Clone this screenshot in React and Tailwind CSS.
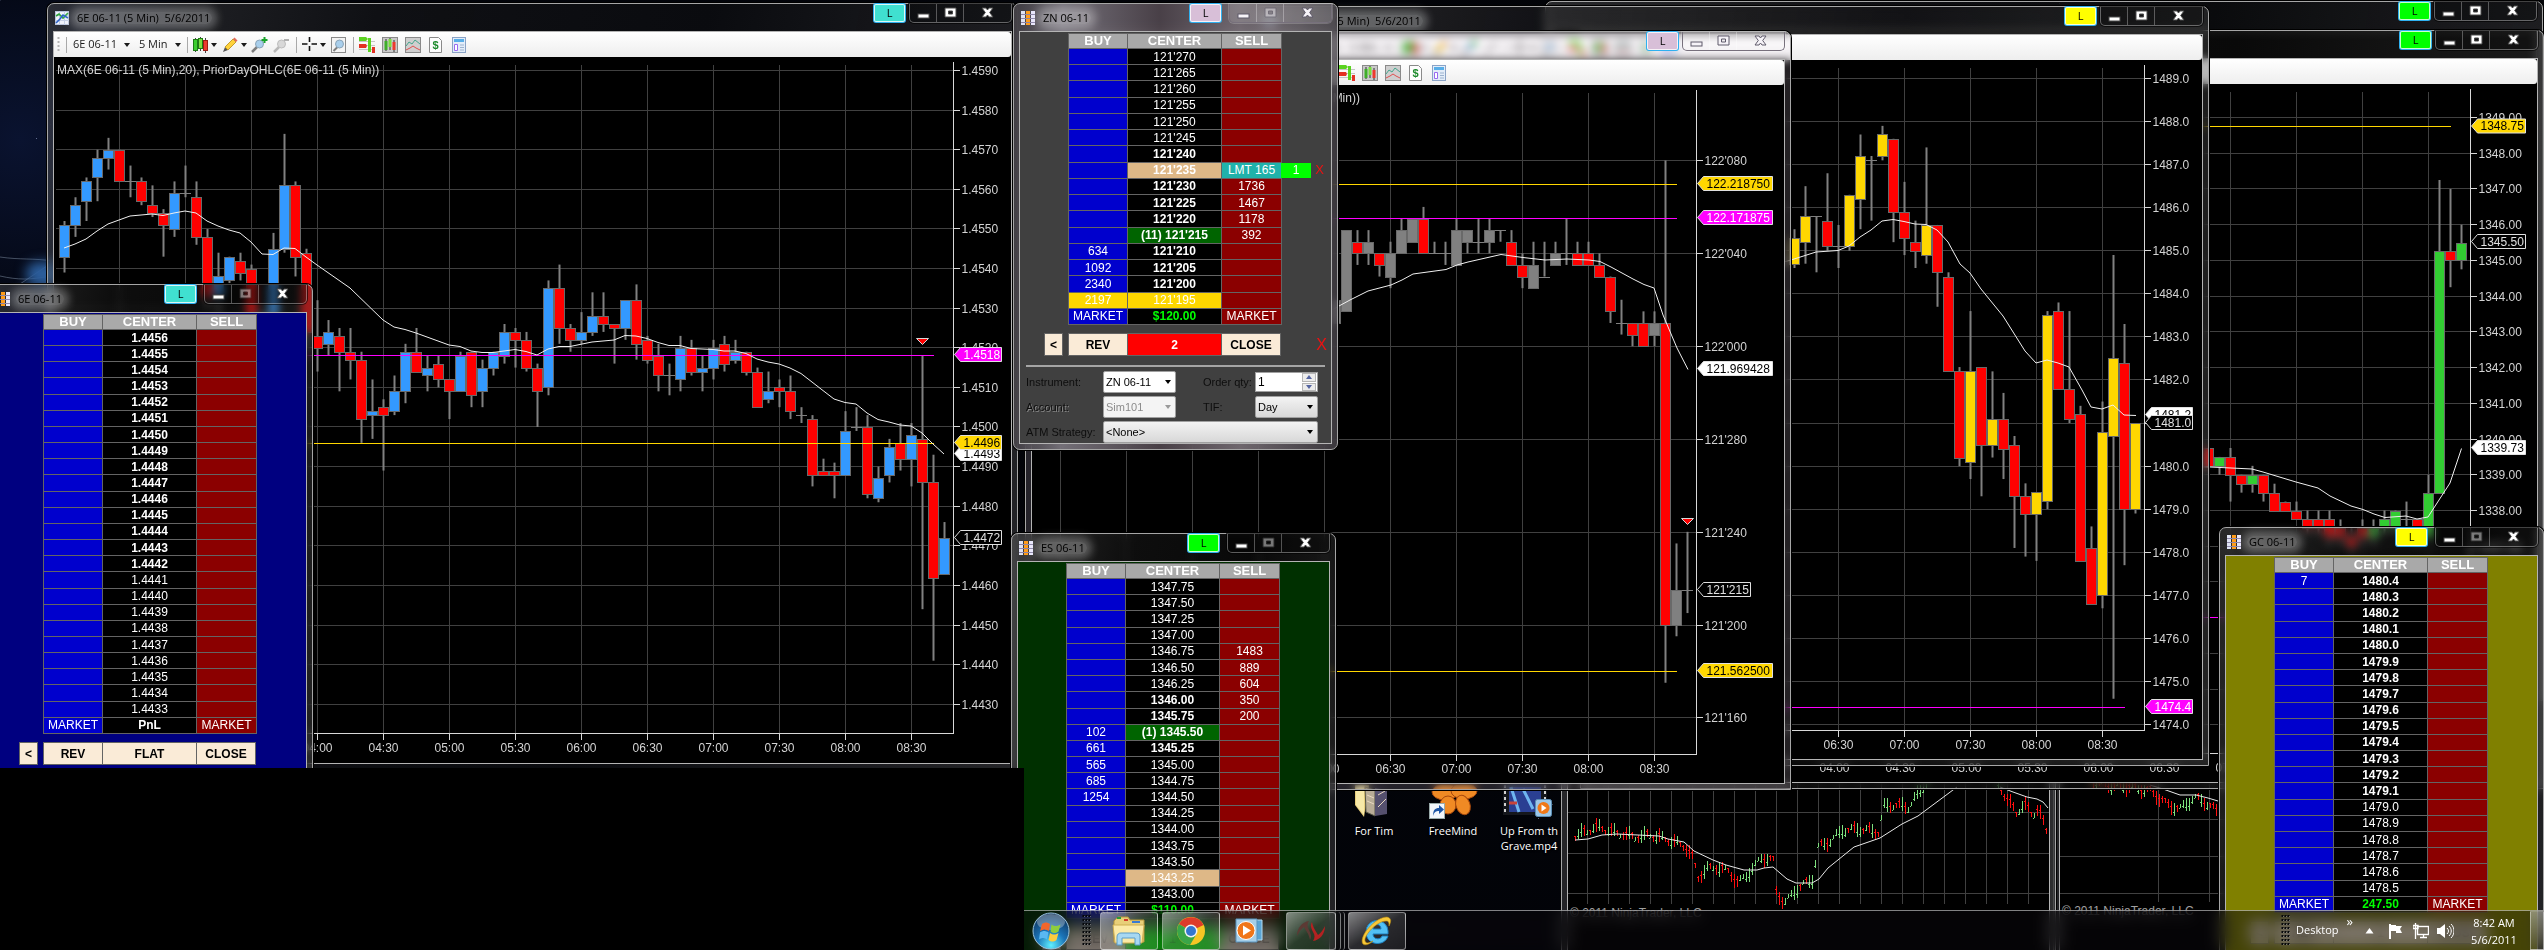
import React from 'react';
import clsx from 'clsx';

/* ---------- chart data: [open, high, low, close] in ticks ---------- */

const EURO = [
  [143,152,139,151],[151,158,148,156],[157,163,152,162],[163,170,157,168],[168,173,165,170],[170,170,162,162],
  [162,166,158,162],[162,163,156,157],[156,161,153,154],[154,155,143,151],[150,162,148,159],[159,166,158,159],
  [158,162,146,148],[148,150,130,133],[133,144,128,138],[137,143,136,143],[142,144,137,139],[140,141,125,128],
  [126,129,125,128],[128,149,125,145],[145,174,144,161],[161,162,138,143],[144,145,120,124],[123,132,114,120],
  [121,127,118,124],[123,125,109,119],[119,125,112,117],[117,119,96,102],[103,112,97,104],[105,107,89,103],
  [104,113,103,109],[109,121,106,119],[119,125,114,114],[113,118,109,115],[116,118,110,112],[112,112,102,109],
  [109,119,109,118],[119,119,105,108],[109,117,105,115],[115,119,113,119],[118,126,116,124],[124,125,115,122],
  [122,124,114,115],[115,116,100,109],[110,137,108,135],[135,141,121,125],[125,126,119,122],[122,129,121,124],
  [124,134,123,128],[128,134,124,126],[126,126,116,125],[125,132,122,132],[132,136,117,121],[122,123,116,117],
  [118,121,109,113],[113,116,108,113],[112,123,109,120],[120,122,113,114],[114,118,109,115],[115,122,112,120],
  [121,123,114,116],[117,122,116,119],[119,119,113,114],[114,115,105,105],[107,114,106,109],[110,112,105,109],
  [109,113,102,104],[103,105,101,103],[102,103,85,88],[89,92,88,88],[89,91,82,88],[88,104,88,99],
  [100,105,99,100],[100,103,82,83],[82,90,81,87],[88,97,86,95],[96,101,89,92],[92,101,85,98],
  [97,118,54,86],[86,93,41,62],[63,76,63,72],
];
const EURO_MA = '64,248 75,244 86,239 97,231 108,224 119,220 130,216 141,215 152,214 163,215.5 174,213 185,211 196,213 207,221 218,226 229,230 240,233 251,242 262,254 273,254.5 284,248 295,248.5 306,257 317,265 350,288 383,320 394,327 405,329.5 416,333 427,337 438,341 449,345 460,346.5 471,351 482,352.5 493,352.5 504,351 515,349.5 526,351.5 537,355 548,349 559,346.5 570,346.5 592,342 614,340 625,335.5 636,336 647,338.5 658,342.5 669,345.5 680,345.5 691,348.5 702,349 713,349.5 724,351 735,351 746,353.5 757,359 768,362 779,364 790,368 801,373.5 821,389 834,399 845,402.5 856,404 867,413 878,419.5 889,422 900,425 911,426 922,433 933,444 944,454';

const NOTES = [
  [34,36,34,36],[35,42,35,42],[41,42,39,40],[40,42,39,41],[40,40,38,39],[38,41,37,40],[40,43,40,42],[41,43,41,43],[43,44,40,40],
  [40,41,40,40],[40,41,39,40],[39,43,39,42],[41,42,40,42],[41,43,40,41],[41,43,40,42],[42,42,41,42],[41,42,39,39],
  [39,40,37,38],[37,41,37,39],[38,41,38,38],[39,41,39,40],[40,43,39,40],[40,41,39,39],[40,41,39,39],[39,40,38,38],
  [38,38,34,35],[34,36,33,34],[34,34,32,33],[34,35,32,32],[33,35,32,34],[34,48,3,8],[8,15,7,11],[11,16,9,11],
];
const NOTES_MA = '1330,311 1339,306 1350,300 1368,291 1391,285 1402,280 1413,274 1446,269.5 1457,265 1468,262 1490,257 1501,254.5 1523,257.5 1545,260 1567,259 1589,260 1600,261.5 1611,267 1633,279 1644,284.5 1654,288 1663,315 1677,348 1688,369.5';

const GOLD = [
  [147,155,146,153],[152,165,147,158],[158,158,145,158],[157,168,150,151],[151,156,146,151],[151,163,150,163],
  [162,177,155,172],[171,172,157,171],[172,179,171,177],[176,176,152,159],[159,166,149,153],[152,157,146,150],
  [149,174,147,156],[156,156,137,145],[144,145,122,122],[122,123,100,102],[101,136,97,122],[123,123,93,105],
  [105,122,102,111],[111,117,97,104],[105,107,81,93],[93,96,79,89],[89,94,78,94],[92,136,90,135],
  [136,138,118,118],[118,136,110,111],[112,114,78,78],[81,86,68,68],[70,115,67,108],[107,149,46,125],
  [124,133,77,90],[90,110,89,110],
];
const GOLD_MA = '1780,263 1791,260 1816,252 1838,250.5 1849,246 1860,237 1871,230 1882,221 1893,219.5 1904,221.5 1915,224 1926,224.5 1937,230 1948,242 1960,264 1970,273 1981,289 2003,316 2025,351 2036,363 2047,360 2058,363 2069,367 2082,390 2091,407 2102,409 2113,405 2124,415 2136,415.5';

const MINI = [
  [7,7,5,5],[5,6,4,6],[6,7,1,4],[4,4,2,3],[3,5,2,4],[4,4,1,2],[2,3,0,0],[1,1,0,0],[0,1,-1,-1],[-1,0,-3,-2],
  [-1,0,-3,-2],[-1,0,-4,-3],[-2,-1,-4,-3],[-3,-2,-5,-4],[-2,-1,-4,-3],[-3,-1,-4,-2],[-2,0,-3,-1],[-2,0,-3,0],
  [-1,1,-3,-1],[-1,-1,-4,-3],[-3,4,-3,2],[2,37,2,29],[29,36,25,28],[28,32,27,30],
];
const MINI_MA = '2200,467 2210,467 2252,469 2263,472 2296,482 2318,488 2330,496 2351,506 2363,509.5 2374,514 2385,517.5 2406,516 2417,519 2428,517 2450,483 2461.5,448.5';

/* ---------- charts ---------- */

function Candle({ x, open, high, low, close, up }) {
  const top = Math.round(Math.min(open, close)) + 0.5;
  const bottom = Math.round(Math.max(open, close)) + 0.5;
  return (
    <g>
      <line x1={x} x2={x} y1={high} y2={low} stroke="#808080" strokeWidth="2" />
      {bottom - top < 1 ? (
        <line x1={x - 5.5} x2={x + 5.5} y1={top} y2={top} stroke="#808080" />
      ) : (
        <rect x={x - 5} y={top} width="10" height={bottom - top} fill={close > open ? '#ff0000' : up} stroke="#696969" />
      )}
    </g>
  );
}

function Tag({ x, y, text, fill, color = '#000000', width }) {
  return (
    <g>
      <polygon
        points={`${x + 1},${y} ${x + 7},${y - 7} ${x + width},${y - 7} ${x + width},${y + 7} ${x + 7},${y + 7}`}
        fill={fill}
        stroke="#e0e0e0"
      />
      <text x={x + 10} y={y + 4} fill={color}>{text}</text>
    </g>
  );
}

function PriceChart({ view, caption, candles, firstX, toY, up, ma, prices, times, axis, lines, tags, marker, left = view[0] + 2 }) {
  return (
    <svg
      viewBox={view.join(' ')}
      width={view[2]}
      height={view[3]}
      className="block shrink-0 bg-black text-[12px]"
      role="img"
      aria-label={caption || 'Price chart'}
    >
      <g stroke="#404040" shapeRendering="crispEdges">
        {prices.map(([label, y]) => <line key={label} x1={left} x2={axis.x} y1={y} y2={y} />)}
        {times.map(([label, x]) => <line key={label} x1={x} x2={x} y1={axis.top + 3} y2={axis.bottom} />)}
      </g>
      <g stroke="#d8d8d8" shapeRendering="crispEdges">
        <line x1={axis.x} x2={axis.x} y1={axis.top} y2={axis.bottom} />
        <line x1={left} x2={axis.x} y1={axis.bottom} y2={axis.bottom} />
        {prices.map(([label, y]) => <line key={label} x1={axis.x} x2={axis.x + 6} y1={y} y2={y} />)}
        {times.map(([label, x]) => <line key={label} x1={x} x2={x} y1={axis.bottom} y2={axis.bottom + 6} />)}
      </g>
      <g fill="#d3d3d3">
        {prices.map(([label, y]) => <text key={label} x={axis.x + 8} y={y + 4}>{label}</text>)}
        {times.map(([label, x]) => <text key={label} x={x} y={axis.bottom + 18} textAnchor="middle">{label}</text>)}
        {caption && <text x={view[0] + 3} y={view[1] + 17}>{caption}</text>}
      </g>
      {candles.map(([o, h, l, c], i) => (
        <Candle key={i} x={firstX + 11 * i} open={toY(o)} high={toY(h)} low={toY(l)} close={toY(c)} up={up} />
      ))}
      {lines.map(([y, x2, color]) => <line key={y} x1={left} x2={x2} y1={y} y2={y} stroke={color} shapeRendering="crispEdges" />)}
      <polyline points={ma} fill="none" stroke="#f0f0f0" strokeWidth="1" />
      {tags.map((t) => <Tag key={t.text} x={axis.x} {...t} />)}
      {marker && (
        <polygon
          points={`${marker[0] - 6},${marker[1]} ${marker[0] + 6},${marker[1]} ${marker[0]},${marker[1] + 6}`}
          fill="#ff0000"
          stroke="#d8d8d8"
        />
      )}
    </svg>
  );
}

const timeScale = (labels, firstX) => labels.map((t, i) => [t, firstX + 66 * i]);

/* ---------- icons ---------- */

function ChartIcon() {
  return (
    <svg width="14" height="14" viewBox="0 0 14 14" className="shrink-0" aria-hidden="true">
      <rect x="0.5" y="0.5" width="13" height="13" fill="#eef2fb" stroke="#b9c3da" />
      <path d="M0 4.5h14M0 9.5h14M4.5 0v14M9.5 0v14" stroke="#c4cfe6" />
      <path d="M1 5l3-2 4 4 5-5" fill="none" stroke="#2fa53a" strokeWidth="1.6" />
      <path d="M1 12l4-4 3-4 5 3" fill="none" stroke="#2b62c9" strokeWidth="1.6" />
    </svg>
  );
}

function LadderIcon() {
  return (
    <svg width="14" height="14" viewBox="0 0 14 14" className="shrink-0" aria-hidden="true">
      <path d="M0 0h4v14H0z" fill="#dfe3f3" />
      <path d="M5 0h4v14H5z" fill="#ff9c1a" />
      <path d="M10 0h4v14h-4z" fill="#e8e6fb" />
      <path d="M0 3.5h14M0 7.5h14M0 11.5h14" stroke="#8d86a8" />
    </svg>
  );
}

const Caret = ({ className }) => (
  <svg width="6" height="4" viewBox="0 0 6 4" className={clsx('shrink-0', className)} aria-hidden="true"><path d="M0 0h6L3 4z" fill="currentColor" /></svg>
);
const Bar = () => <span className="h-4 w-px shrink-0 bg-[#a9a9a9]" />;

function Lens({ sign }) {
  return (
    <svg width="17" height="16" viewBox="0 0 17 16" aria-hidden="true">
      <path d="M1 15l5-5" stroke={sign === '-' ? '#b8b8b8' : '#7d7d7d'} strokeWidth="2.5" />
      <circle cx="8.500" cy="7" r="4" fill={sign === '-' ? '#d8d8d8' : '#a9cfec'} stroke={sign === '-' ? '#bdbdbd' : '#8aa4b8'} />
      {sign === '+' ? <path d="M13.500 0v6M10.500 3h6" stroke="#17a22b" strokeWidth="2" /> : <path d="M11 3h5" stroke="#b0b0b0" strokeWidth="2" />}
    </svg>
  );
}

function Toolbar({ symbol }) {
  const icon = 'flex shrink-0 items-center';
  return (
    <div className="flex h-[25px] shrink-0 items-center rounded-r-[3px] bg-gradient-to-b from-white to-[#eeeeee] pl-[3px] text-[11px] text-[#1b1b1b]">
      <svg width="3" height="16" viewBox="0 0 3 16" className="shrink-0" aria-hidden="true"><path d="M1.500 0v16" stroke="#b5b5b5" strokeWidth="2" strokeDasharray="2 2" /></svg>
      <span className="w-[6px] shrink-0" />
      <Bar />
      <button className="ml-[6px] flex shrink-0 items-center gap-[7px] font-['Open_Sans',sans-serif] whitespace-nowrap">{symbol}<Caret /></button>
      <button className="ml-[9px] flex shrink-0 items-center gap-[7px] font-['Open_Sans',sans-serif] whitespace-nowrap">5 Min<Caret /></button>
      <span className="w-[6px] shrink-0" />
      <Bar />
      <button aria-label="Chart style" className={clsx(icon, 'ml-[5px] gap-[3px]')}>
        <svg width="15" height="16" viewBox="0 0 15 16" aria-hidden="true">
          <path d="M2.500 1v14M7.500 0v14M12.500 1v15" stroke="#444" />
          <rect x="0.500" y="2.500" width="4" height="11" fill="#3ccf2f" stroke="#1d7c15" />
          <rect x="5.500" y="1.500" width="4" height="10" fill="#7be03f" stroke="#1d7c15" />
          <rect x="10.500" y="3.500" width="4" height="10" fill="#ee3b2e" stroke="#9c1d14" />
        </svg>
        <Caret />
      </button>
      <button aria-label="Drawing tools" className={clsx(icon, 'ml-[5px] gap-[3px]')}>
        <svg width="16" height="16" viewBox="0 0 16 16" aria-hidden="true">
          <path d="M1 15l2-5 3 3z" fill="#555" />
          <path d="M3 10l8-8 3 3-8 8z" fill="#ffd23b" stroke="#b58a14" strokeWidth="0.800" />
          <path d="M11 2l1.500-1.500 3 3L14 5z" fill="#e06a5a" />
        </svg>
        <Caret />
      </button>
      <button aria-label="Zoom in" className={clsx(icon, 'ml-[4px]')}><Lens sign="+" /></button>
      <button aria-label="Zoom out" className={clsx(icon, 'ml-[5px]')}><Lens sign="-" /></button>
      <span className="w-[6px] shrink-0" />
      <Bar />
      <button aria-label="Cursor" className={clsx(icon, 'ml-[5px] gap-[3px]')}>
        <svg width="15" height="15" viewBox="0 0 15 15" aria-hidden="true"><path d="M7.500 0v5M7.500 9v5M0 7h5.500M9.500 7H15" stroke="#111" strokeWidth="1.600" /></svg>
        <Caret />
      </button>
      <button aria-label="Data box" className={clsx(icon, 'ml-[5px]')}>
        <svg width="15" height="16" viewBox="0 0 15 16" aria-hidden="true">
          <rect x="0.500" y="0.500" width="14" height="15" fill="#f4f4f4" stroke="#8a8a8a" />
          <path d="M2.500 14l4-4" stroke="#7d7d7d" strokeWidth="2" />
          <circle cx="8.500" cy="7" r="4" fill="#a9cfec" stroke="#8aa4b8" />
        </svg>
      </button>
      <span className="w-[7px] shrink-0" />
      <Bar />
      <div className="ml-[5px] flex shrink-0 items-center gap-[7px]">
        <button aria-label="Chart trader" className={icon}>
          <svg width="16" height="16" viewBox="0 0 16 16" aria-hidden="true">
            <path d="M0 4.500h16M0 8.500h16M0 12.500h16" stroke="#c4c4c4" />
            <path d="M0 0h7l2 2-2 2H0z" fill="#5bd321" />
            <path d="M0 7h7l1 2-1 2H0z" fill="#e33022" />
            <path d="M9 1h3v14H9z" fill="#5bd321" />
            <path d="M13 10h3v6h-3z" fill="#e33022" />
          </svg>
        </button>
        <button aria-label="Data series" className={icon}>
          <svg width="16" height="16" viewBox="0 0 16 16" aria-hidden="true">
            <rect x="0.500" y="0.500" width="15" height="15" fill="#c9c9c9" stroke="#8a8a8a" />
            <path d="M4 2v12M8 1v12M12 3v12" stroke="#333" />
            <path d="M2.500 4h3v9h-3z" fill="#3fae2a" />
            <path d="M6.500 2h3v8h-3z" fill="#7be03f" />
            <path d="M10.500 5h3v8h-3z" fill="#ee3b2e" />
          </svg>
        </button>
        <button aria-label="Indicators" className={icon}>
          <svg width="16" height="16" viewBox="0 0 16 16" aria-hidden="true">
            <rect x="0.500" y="0.500" width="15" height="15" fill="#cfcfcf" stroke="#8a8a8a" />
            <path d="M1 9l3-4 3 2 3-4 5 4" fill="none" stroke="#44a58c" />
            <path d="M1 13l4-2 3-2 3 2 4 2" fill="none" stroke="#e05050" />
          </svg>
        </button>
        <button aria-label="Strategies" className={clsx(icon, 'ml-[1px]')}>
          <svg width="13" height="16" viewBox="0 0 13 16" aria-hidden="true">
            <path d="M0.500 0.500h9l3 3v12h-12z" fill="#fdfdfd" stroke="#8a8a8a" />
            <text x="6.500" y="12" textAnchor="middle" fontSize="11" fontWeight="700" fill="#1f8c2e">$</text>
          </svg>
        </button>
        <button aria-label="Properties" className={clsx(icon, 'ml-[3px]')}>
          <svg width="14" height="16" viewBox="0 0 14 16" aria-hidden="true">
            <rect x="0.500" y="0.500" width="13" height="15" fill="#e3edf9" stroke="#8aa3c6" />
            <path d="M2 2h10v3H2z" fill="#58aee8" />
            <path d="M2.500 7.500h3v6h-3z" fill="#fff" stroke="#9a6bf0" />
            <path d="M8 8h4M8 10.500h4M8 13h4" stroke="#9db3cf" />
          </svg>
        </button>
      </div>
    </div>
  );
}

/* ---------- window frame ---------- */

const GLASS = {
  dark: 'bg-[linear-gradient(100deg,#5a5a5a73,#28282859_30%,#1e1e1e4d_60%,#5a5a5a66)]',
  clear: 'bg-[#f0dcf226]',
  mist: 'bg-[linear-gradient(to_right,#4a464ccc,#8f8a94cc_15%,#5b5058cc_45%,#8a8088cc_70%,#4a464ccc)]',
};

function Controls({ glass, dimMax }) {
  const dark = glass === 'dark';
  const fg = dark ? '#ffffff' : '#f6f3f8';
  const edge = dark ? '#4a4a4a' : '#5f5a6a';
  return (
    <div className={clsx('flex h-[19px] shrink-0 rounded-b-[5px] border border-t-0 ring-1', dark ? 'border-white/35 bg-black/30 ring-black/60' : 'border-[#77707c] bg-white/15 ring-white/20')}>
      <button aria-label="Minimize" className="flex w-[27px] items-center justify-center border-r border-white/30">
        <svg width="13" height="14" viewBox="0 0 13 14" aria-hidden="true"><rect x="1" y="8" width="11" height="4" fill={fg} stroke={edge} /></svg>
      </button>
      <button aria-label="Maximize" className="flex w-[27px] items-center justify-center border-r border-white/30">
        <svg width="13" height="12" viewBox="0 0 13 12" aria-hidden="true" opacity={dimMax ? 0.45 : 1}>
          <path fillRule="evenodd" d="M1 1h11v9H1zM4.500 4v3h4V4z" fill={fg} stroke={edge} />
        </svg>
      </button>
      <button aria-label="Close" className="flex w-[47px] items-center justify-center">
        <svg width="13" height="12" viewBox="0 0 13 12" aria-hidden="true">
          <path d="M1 1h4l1.500 2L8 1h4L8.700 5.500 12 10H8L6.500 8 5 10H1l3.300-4.500z" fill={fg} stroke={edge} />
        </svg>
      </button>
    </div>
  );
}

function Win({ className, title, icon, link, glass = 'dark', dimMax, children, bodyClass }) {
  return (
    <section
      className={clsx(
        'absolute flex flex-col rounded-t-[7px] border border-[#a6a6a6] px-[5px] pb-[5px] shadow-[0_0_0_1px_#000000] backdrop-blur-[4px]',
        GLASS[glass],
        className,
      )}
    >
      <header className="flex h-[27px] shrink-0 items-start">
        <div className="flex h-full min-w-0 flex-1 items-center gap-[6px] pl-[2px]">
          {icon}
          {title && (
            <h2 className="rounded-full bg-white/30 px-[2px] font-['Open_Sans',sans-serif] text-[11px] leading-[12px] whitespace-pre text-black shadow-[0_0_8px_5px_rgba(255,255,255,0.3)]">
              {title}
            </h2>
          )}
        </div>
        {link && (
          <button
            className={clsx(
              'h-[18px] w-[31px] shrink-0 rounded-[2px] border border-white/80 text-center font-[\'Open_Sans\',sans-serif] text-[11px] leading-[16px] text-black ring-1 ring-[#2fb0f0]',
              dimMax ? 'mr-[8px]' : 'mr-[4px]',
              link,
            )}
          >
            L
          </button>
        )}
        <Controls glass={glass} dimMax={dimMax} />
      </header>
      <div className={clsx('flex min-h-0 flex-1 flex-col overflow-hidden border border-[#b4b4b4]', bodyClass)}>{children}</div>
    </section>
  );
}

/* ---------- price ladders ---------- */

const cell = 'border border-[#646464] p-0 leading-[14px]';

function Ladder({ rows, height, pnl }) {
  return (
    <table className={clsx('mt-px ml-[48px] w-[213px] shrink-0 table-fixed border-collapse text-center text-[12px] text-white', height)}>
      <thead>
        <tr>
          <th className={clsx(cell, 'w-[59px] bg-[#a9a9a9] text-[13px]')}>BUY</th>
          <th className={clsx(cell, 'w-[94px] bg-[#a9a9a9] text-[13px]')}>CENTER</th>
          <th className={clsx(cell, 'w-[60px] bg-[#a9a9a9] text-[13px]')}>SELL</th>
        </tr>
      </thead>
      <tbody>
        {rows.map(({ p, buy, sell, bold, tone, order }) => (
          <tr key={p}>
            <td className={clsx(cell, tone === 'gold' ? 'bg-[#ffd700]' : 'bg-[#0000cd]')}>{buy}</td>
            <td
              className={clsx(
                cell,
                bold && 'font-bold',
                tone === 'gold' && 'bg-[#ffd700]',
                tone === 'tan' && 'bg-[#deb887]',
                tone === 'green' && 'bg-[#006400]',
                !tone && 'bg-black',
              )}
            >
              {p}
            </td>
            <td className={clsx(cell, order ? 'relative bg-[#20b2aa]' : 'bg-[#8b0000]')}>
              {sell}
              {order && (
                <span className="absolute top-0 left-full flex h-full items-center">
                  <span className="flex h-full w-[30px] items-center justify-center bg-[#00ff00]">{order}</span>
                  <button aria-label="Cancel order" className="w-[17px] text-[13px] text-[#ee1111]">X</button>
                </span>
              )}
            </td>
          </tr>
        ))}
        <tr>
          <td className={clsx(cell, 'bg-[#0000cd]')}>MARKET</td>
          <td className={clsx(cell, 'bg-black font-bold', pnl !== 'PnL' && 'text-[#00ff00]')}>{pnl}</td>
          <td className={clsx(cell, 'bg-[#8b0000]')}>MARKET</td>
        </tr>
      </tbody>
    </table>
  );
}

function LadderActions({ middle, middleClass = 'bg-[#faebd7]', cancel }) {
  const b = 'h-full border border-[#646464]';
  return (
    <div className="mt-[8px] flex h-[23px] shrink-0 items-stretch pl-[24px] text-[12px] font-bold text-black">
      <button aria-label="Collapse" className={clsx(b, 'mr-[5px] w-[19px] bg-[#faebd7]')}>&lt;</button>
      <button className={clsx(b, 'w-[60px] bg-[#faebd7]')}>REV</button>
      <button className={clsx(b, '-ml-px w-[95px]', middleClass)}>{middle}</button>
      <button className={clsx(b, '-ml-px w-[60px] bg-[#faebd7]')}>CLOSE</button>
      {cancel && <button aria-label="Cancel all" className="ml-auto mr-[4px] text-[16px] font-normal text-[#ee1111]">X</button>}
    </div>
  );
}

const range = (start, step, count, digits) => Array.from({ length: count }, (_, i) => (start - step * i).toFixed(digits));

const EURO_ROWS = range(1.4456, 0.0001, 24, 4).map((p, i) => ({ p, bold: i < 15 }));

const ZN_SIDE = {
  "121'230": { sell: 1736 }, "121'225": { sell: 1467 }, "121'220": { sell: 1178 },
  "121'210": { buy: 634 }, "121'205": { buy: 1092 }, "121'200": { buy: 2340 }, "121'195": { buy: 2197, tone: 'gold', bold: false },
  "121'235": { sell: 'LMT 165', tone: 'tan', order: 1 },
};
const ZN_ROWS = range(270, 5, 16, 0).map((n, i) => {
  const p = `121'${n}`;
  if (n === '215') return { p: "(11) 121'215", bold: true, tone: 'green', sell: 392 };
  return { p, bold: i >= 6, ...ZN_SIDE[p] };
});

const ES_SIDE = {
  '1346.75': { sell: 1483 }, '1346.50': { sell: 889 }, '1346.25': { sell: 604 }, '1346.00': { sell: 350, bold: true }, '1345.75': { sell: 200, bold: true },
  '1345.50': { p: '(1) 1345.50', buy: 102, bold: true, tone: 'green' }, '1345.25': { buy: 661, bold: true },
  '1345.00': { buy: 565 }, '1344.75': { buy: 685 }, '1344.50': { buy: 1254 }, '1343.25': { tone: 'tan' },
};
const ES_ROWS = range(1347.75, 0.25, 20, 2).map((p) => ({ p, ...ES_SIDE[p] }));

const GC_ROWS = range(1480.4, 0.1, 20, 1).map((p, i) => ({ p, bold: i < 14, buy: i === 0 ? 7 : undefined }));

function Combo({ id, value, className, disabled }) {
  return (
    <span className={clsx('relative block h-[22px]', className)}>
      <select
        id={id}
        defaultValue={value}
        disabled={disabled}
        className={clsx(
          'h-full w-full appearance-none rounded-[2px] border border-[#a0a0a0] pr-4 pl-[2px] text-[11px]',
          disabled ? 'bg-[#f4f4f4] text-[#8c8c8c]' : id === 'instrument' ? 'bg-white text-black' : 'bg-gradient-to-b from-[#f3f3f3] to-[#d8d8d8] text-black',
        )}
      >
        <option>{value}</option>
      </select>
      <Caret className={clsx('pointer-events-none absolute top-[9px] right-[5px]', disabled ? 'text-[#9a9a9a]' : 'text-black')} />
    </span>
  );
}

function OrderForm() {
  return (
    <form className="mx-[6px] mt-[9px] border-t-2 border-[#a5a5a5] pt-[4px] text-[11px] text-[#0d0d0d]">
      <div className="grid grid-cols-[77px_73px_27px_52px_63px] items-center gap-y-[3px]">
        <label htmlFor="instrument">Instrument:</label>
        <Combo id="instrument" value="ZN 06-11" />
        <span />
        <label htmlFor="qty" className="whitespace-nowrap">Order qty:</label>
        <span className="flex h-[20px] items-center border border-[#a0a0a0] bg-white pr-px">
          <input id="qty" defaultValue="1" inputMode="numeric" className="min-w-0 flex-1 bg-white pl-[2px] text-[12px] text-black outline-none" />
          <span className="flex h-[18px] w-[14px] flex-col gap-px">
            <button type="button" aria-label="Increase" className="flex flex-1 items-center justify-center border border-[#b5b5b5] bg-[#ececec] text-[#5464a0]"><Caret className="rotate-180" /></button>
            <button type="button" aria-label="Decrease" className="flex flex-1 items-center justify-center border border-[#b5b5b5] bg-[#ececec] text-[#5464a0]"><Caret /></button>
          </span>
        </span>
        <label htmlFor="account" className="[text-shadow:1px_1px_0_#8a8a8a]">Account:</label>
        <Combo id="account" value="Sim101" disabled />
        <span />
        <label htmlFor="tif">TIF:</label>
        <Combo id="tif" value="Day" />
        <label htmlFor="atm" className="whitespace-nowrap">ATM Strategy:</label>
        <Combo id="atm" value="<None>" className="col-span-4" />
      </div>
    </form>
  );
}

/* ---------- background chart bars ---------- */

const MINI_PATH = [
  [1575, 835], [1590, 828], [1600, 826], [1612, 831], [1622, 833], [1634, 836], [1650, 834], [1665, 838], [1672, 840], [1685, 846], [1692, 856],
  [1698, 876], [1706, 868], [1716, 866], [1728, 870], [1738, 882], [1750, 870], [1762, 856], [1773, 860], [1776, 890], [1784, 903], [1794, 890],
  [1803, 884], [1812, 878], [1818, 846], [1830, 840], [1842, 829], [1860, 828], [1878, 831], [1884, 805], [1894, 804], [1908, 806], [1920, 790],
  [1930, 778],
];
const MINI_PATH_2 = [[1998, 784], [2008, 800], [2016, 812], [2024, 802], [2032, 815], [2038, 806], [2043, 822], [2047, 834]];
const MINI_PATH_3 = [[2090, 780], [2105, 786], [2130, 788], [2150, 792], [2168, 806], [2180, 810], [2194, 798], [2206, 804], [2216, 812]];

function barsAlong(path) {
  const out = [];
  for (let x = path[0][0]; x <= path[path.length - 1][0]; x += 3) {
    const j = path.findIndex(([px]) => px >= x);
    const [x1, y1] = path[j];
    const [x0, y0] = path[Math.max(0, j - 1)];
    const y = x1 === x0 ? y1 : y0 + ((y1 - y0) * (x - x0)) / (x1 - x0);
    const wob = Math.sin(x * 1.7) * 3;
    const size = 2 + Math.abs(Math.sin(x * 2.3)) ** 2 * 5;
    out.push({ x, y: y + wob, size, up: Math.sin(x * 0.9) + (y0 - y1) * 0.08 > 0 });
  }
  return out;
}

function BarChart({ view, paths, ma, hs, vs, note }) {
  return (
    <svg viewBox={view.join(' ')} width={view[2]} height={view[3]} className="block shrink-0 bg-black text-[12px]" role="img" aria-label="Bar chart">
      <g stroke="#404040" shapeRendering="crispEdges">
        {hs.map((y) => <line key={y} x1={view[0]} x2={view[0] + view[2]} y1={y} y2={y} />)}
        {vs.map((x) => <line key={x} x1={x} x2={x} y1={view[1]} y2="903" />)}
      </g>
      <g shapeRendering="crispEdges">
        {paths.flatMap(barsAlong).map(({ x, y, size, up }) => (
          <path
            key={x}
            d={`M${x} ${Math.round(y - size)}V${Math.round(y + size)}M${x - 1} ${Math.round(y + (up ? 2 : -2))}h1M${x} ${Math.round(y - (up ? 2 : -2))}h1`}
            stroke={up ? '#7ee07e' : '#ff1010'}
            fill="none"
          />
        ))}
      </g>
      {ma.map((m) => <polyline key={m} points={m} fill="none" stroke="#e8e8e8" />)}
      <text x={view[0] + 2} y="916" fill="#a0a0a0">{note}</text>
    </svg>
  );
}

/* ---------- desktop ---------- */

function Stars() {
  const dots = Array.from({ length: 260 }, (_, i) => [(i * 7919) % 2544, (i * 4597) % 950, (i % 5) * 0.08 + 0.15]);
  return (
    <svg className="absolute inset-0 h-full w-full" aria-hidden="true">
      {dots.map(([x, y, o]) => <rect key={`${x}-${y}`} x={x} y={y} width="1" height="1" fill="#c8d4ff" opacity={o} />)}
      <path d="M0 257c20 3 34 1 52 4M0 276c18 4 30 4 50 0M20 284l30-20" stroke="#8494a8" strokeOpacity="0.5" fill="none" />
    </svg>
  );
}

function DesktopIcons() {
  return (
    <ul className="absolute top-[785px] left-[1335px] flex font-['Open_Sans',sans-serif] text-[11px] leading-[15px] text-white [text-shadow:0_1px_2px_#000]">
      <li className="flex w-[78px] flex-col items-center gap-[4px] text-center">
        <svg width="42" height="34" viewBox="0 0 42 34" aria-hidden="true">
          <path d="M2 0h14l-5 32-9-12z" fill="#e8cf7c" />
          <path d="M3 0h8v30l-8-10z" fill="#f7e9a8" />
          <path d="M12 2l10 3v26l-9-4z" fill="#b9ad97" stroke="#554" />
          <path d="M22 3l12 2v24l-12 2z" fill="#55506e" />
          <path d="M14 10l7 3M14 16l7 3M25 10l7-4M25 22l8-8" stroke="#e9d9c0" />
        </svg>
        <span>For Tim</span>
      </li>
      <li className="flex w-[80px] flex-col items-center gap-[4px] text-center">
        <svg width="50" height="34" viewBox="0 0 50 34" aria-hidden="true">
          <g fill="#f08a24" stroke="#a8480c">
            <ellipse cx="17" cy="7" rx="13" ry="8" />
            <ellipse cx="36" cy="6" rx="13" ry="8" />
            <ellipse cx="20" cy="20" rx="8" ry="9" />
            <ellipse cx="35" cy="20" rx="7" ry="10" transform="rotate(-20 35 20)" />
          </g>
          <rect x="1.500" y="18.500" width="15" height="15" fill="#f2f6fb" stroke="#9aa" />
          <path d="M5 31c0-6 2-8 6-8v-3l5 4.500-5 4.500v-3c-3 0-5 1-6 5z" fill="#1d55a5" />
        </svg>
        <span>FreeMind</span>
      </li>
      <li className="flex w-[72px] flex-col items-center gap-[4px] text-center">
        <svg width="52" height="34" viewBox="0 0 52 34" aria-hidden="true">
          <rect x="0" y="0" width="44" height="30" fill="#15171c" />
          <path d="M2 0v30M42 0v30" stroke="#d0d0d0" strokeWidth="2" strokeDasharray="3 3" />
          <rect x="6" y="2" width="32" height="25" fill="#2a3f92" />
          <path d="M8 2l8 25M20 4l10 20" stroke="#6fb6f0" strokeWidth="3" />
          <path d="M6 18h8" stroke="#c8443a" strokeWidth="3" />
          <rect x="32.500" y="14.500" width="16" height="17" rx="2" fill="#9cc7e8" stroke="#5a8db5" />
          <circle cx="40.500" cy="23" r="6" fill="#f07818" />
          <path d="M38.500 19.500v7l5-3.500z" fill="#fff" />
        </svg>
        <span>Up From th Grave.mp4</span>
      </li>
    </ul>
  );
}

const Grip = () => (
  <svg width="9" height="32" viewBox="0 0 9 32" className="shrink-0" aria-hidden="true">
    <path d="M1.500 0v32M4.500 0v32M7.500 0v32" stroke="#05070a" strokeWidth="2" strokeDasharray="2 2" />
    <path d="M2.500 1v32M5.500 1v32M8.500 1v32" stroke="#ffffff" strokeOpacity="0.350" strokeDasharray="1 3" />
  </svg>
);

function Taskbar() {
  const frame = 'flex h-[38px] items-center justify-center rounded-[3px] border border-white/45 bg-gradient-to-br from-white/50 via-white/15 to-white/10';
  return (
    <footer className="absolute right-0 bottom-0 left-[1024px] flex h-[40px] items-center border-t border-white/50 bg-[#0a080c]/50 font-['Open_Sans',sans-serif] text-[11px] text-white backdrop-blur-[8px]">
      <button aria-label="Start" className="ml-[8px]">
        <svg width="38" height="38" viewBox="0 0 38 38" aria-hidden="true">
          <defs>
            <radialGradient id="orb" cx="0.500" cy="0.900" r="0.900">
              <stop offset="0" stopColor="#5ff0ff" />
              <stop offset="0.450" stopColor="#1b74b8" />
              <stop offset="1" stopColor="#0e2d52" />
            </radialGradient>
          </defs>
          <circle cx="19" cy="19" r="18" fill="url(#orb)" stroke="#9bc3dd" />
          <ellipse cx="19" cy="10" rx="14" ry="8" fill="#ffffff" opacity="0.300" />
          <path d="M10 12c3-2 5-2 8 0l-1 7c-3-2-6-2-9 0z" fill="#f2662c" />
          <path d="M19.500 12.500c3 2 5 2 9 0l-2 7c-3 2-5 2-8 0z" fill="#8fce3c" />
          <path d="M8 20.500c3-2 5-2 8.500 0l-1.500 7c-3-2-5-2-8 0z" fill="#5ab8f2" />
          <path d="M18 21c3 2 5 2 8.500 0l-2 7c-3 2-5 2-8 0z" fill="#fccc3e" />
        </svg>
      </button>
      <span className="ml-[12px]"><Grip /></span>
      <button aria-label="Windows Explorer" className={clsx(frame, 'ml-[9px] w-[58px]')}>
        <svg width="34" height="30" viewBox="0 0 34 30" aria-hidden="true">
          <path d="M2 5l4-4h10l2 3h14v22H2z" fill="#e8cf78" stroke="#b7963a" />
          <path d="M1 9h31l-2 18H3z" fill="#fbeaa6" stroke="#cfae50" />
          <path d="M5 2h4" stroke="#2a9a3a" strokeWidth="2" /><path d="M12 4h4" stroke="#d23a2a" strokeWidth="2" /><path d="M20 6h8" stroke="#3a7ad2" strokeWidth="2" />
          <path d="M5 29v-8c0-3 2-4 4-4h15c3 0 4 1 4 4v8h-5v-7H10v7z" fill="#a7d8f2" stroke="#5a9cc8" />
        </svg>
      </button>
      <button aria-label="Google Chrome" className={clsx(frame, 'ml-[4px] w-[58px]')}>
        <svg width="30" height="30" viewBox="0 0 30 30" aria-hidden="true">
          <circle cx="15" cy="15" r="14" fill="#f6c624" />
          <path d="M15 15L3 8A14 14 0 0 1 27.500 9z" fill="#dd3b2b" />
          <path d="M15 15L2.900 8A14 14 0 0 0 14 29l6-10z" fill="#3aa648" />
          <circle cx="15" cy="15" r="6.500" fill="#f2f2f2" />
          <circle cx="15" cy="15" r="5" fill="#3477d0" />
        </svg>
      </button>
      <button aria-label="Media Player" className="flex h-[38px] w-[58px] items-center justify-center">
        <svg width="28" height="26" viewBox="0 0 28 26" aria-hidden="true">
          <path d="M5 2h22v20H5z" fill="#5aa4d4" stroke="#b5dcf2" />
          <path d="M1 1h21v23H1z" fill="#a6cfe8" stroke="#5b93bd" />
          <circle cx="11" cy="12.500" r="9" fill="#f0761a" stroke="#fff" />
          <path d="M8 7.500v10l8-5z" fill="#fff" />
        </svg>
      </button>
      <button aria-label="NinjaTrader" className={clsx(frame, 'ml-[8px] w-[50px]')}>
        <svg width="30" height="22" viewBox="0 0 30 22" aria-hidden="true">
          <path d="M1 16C1 8 6 2 13 1c-2 3-2 6 0 9 2 4 3 7 1 10-1-6-4-9-6-13-3 2-5 5-7 9z" fill="#5c3a34" />
          <path d="M29 6c0 8-5 14-12 15 2-3 2-6 0-9-2-4-3-7-1-10 1 6 4 9 6 13 3-2 5-5 7-9z" fill="#b32222" />
        </svg>
      </button>
      <span className="ml-[2px] h-[38px] w-[3px] rounded-r-[3px] border-r border-white/45" />
      <span className="h-[38px] w-[4px] rounded-r-[3px] border-r border-white/45" />
      <button aria-label="Internet Explorer" className={clsx(frame, 'ml-[3px] w-[58px]')}>
        <svg width="32" height="32" viewBox="0 0 32 32" aria-hidden="true">
          <path d="M5 17a11 11 0 0 1 22-1v3H12c0 6 8 6 9 2h6c-3 11-22 10-22-4zm7-3h8c0-6-8-6-8 0z" fill="#52c0f4" stroke="#1c7fc0" />
          <path d="M2 29c-5-7 12-27 24-27 5 1 4 5 2 9 0-3 0-5-3-5C16 6 3 20 4 26c1 3 4 2 8 0-3 3-8 5-10 3z" fill="#f8c838" stroke="#b88a10" strokeWidth="0.600" />
        </svg>
      </button>
      <div className="ml-auto flex h-full items-center">
        <Grip />
        <span className="ml-[6px] text-[11px]">Desktop</span>
        <span className="mb-[18px] ml-[8px] text-[13px]">»</span>
        <svg width="9" height="6" viewBox="0 0 9 6" className="ml-[12px]" aria-hidden="true"><path d="M0.500 5.500h8L4.500 0z" fill="#fff" /></svg>
        <svg width="16" height="16" viewBox="0 0 16 16" className="ml-[14px]" aria-hidden="true">
          <path d="M2 1v15" stroke="#fff" strokeWidth="2" />
          <path d="M3 2h5v1h6l-2 3 2 4H8V8H3z" fill="#fff" />
        </svg>
        <svg width="16" height="16" viewBox="0 0 16 16" className="ml-[9px]" aria-hidden="true">
          <rect x="4.500" y="3.500" width="11" height="8" fill="none" stroke="#fff" strokeWidth="1.400" />
          <path d="M7 14.500h7M10.500 12v2M2.500 0v16M0 2.500h5v3H0z" stroke="#fff" fill="none" strokeWidth="1.300" />
        </svg>
        <svg width="17" height="16" viewBox="0 0 17 16" className="ml-[8px]" aria-hidden="true">
          <path d="M0 5h3l5-4v14l-5-4H0z" fill="#fff" />
          <path d="M10 5c2 2 2 4 0 6M12 3c3 3 3 7 0 10M14 1c4 4 4 10 0 14" fill="none" stroke="#fff" />
        </svg>
        <time className="ml-[14px] w-[52px] text-center leading-[17px]">8:42 AM<br />5/6/2011</time>
        <button aria-label="Show desktop" className="ml-[10px] h-full w-[14px] border border-white/40 bg-gradient-to-b from-white/40 to-white/10" />
      </div>
    </footer>
  );
}

const evenly = (labels, firstY, pitch) => labels.map((l, i) => [l, Math.floor(firstY + pitch * i) + 0.5]);
const seq = (from, step, n) => Array.from({ length: n }, (_, i) => from + step * i);

export default function App() {
  return (
    <main className="relative h-screen w-full overflow-hidden bg-[radial-gradient(circle_at_20px_140px,#0a1330,#02040a_220px,#020307)] font-['Liberation_Sans',Arial,sans-serif]">
      <Stars />
      <div className="absolute top-[262px] left-[26px] h-[24px] w-[40px] rounded-full bg-[#2c5f9e] blur-[6px]" />
      <DesktopIcons />

      <Win className="top-[700px] left-[2053px] h-[280px] w-[430px]" bodyClass="bg-black">
        <BarChart
          view={[2060, 730, 416, 200]}
          paths={[MINI_PATH_3]}
          hs={[820.5, 857.5, 894.5]}
          vs={[2158.5, 2209.5]}
          ma={['2150,786 2163,790 2180,796 2196,796 2208,799 2218,802']}
          note="© 2011 NinjaTrader, LLC"
        />
      </Win>
      <Win className="top-[700px] left-[1561px] h-[280px] w-[495px]" bodyClass="bg-black">
        <BarChart
          view={[1568, 728, 481, 200]}
          paths={[MINI_PATH, MINI_PATH_2]}
          hs={[811.5, 852.5, 892.5]}
          vs={seq(1587.5, 21, 23)}
          ma={[
            '1575,839 1588,838 1602,834 1617,833 1659,835 1668,838 1684,841 1694,850 1713,859 1726,864 1744,869 1757,869 1764,867 1773,866 1787,878 1796,882 1812,882 1819,878 1828,867 1854,846 1880,837 1902,823 1918,815 1957,786',
            '2000,786 2013,791 2027,796 2037,798 2043,801 2048,807',
          ]}
          note="© 2011 NinjaTrader, LLC"
        />
      </Win>

      <Win className="top-[1px] left-[1545px] h-[700px] w-[998px]" link="bg-[#00ff00]" bodyClass="bg-black" />

      <Win className="top-[30px] left-[1580px] h-[759px] w-[964px]" link="bg-[#00ff00]" bodyClass="bg-black">
        <Toolbar symbol="ES 06-11" />
        <PriceChart
          view={[1587, 84, 950, 698]}
          candles={MINI}
          firstX={2208.5}
          toY={(n) => 510.5 - n * 8.932}
          up="#32cd32"
          ma={MINI_MA}
          axis={{ x: 2470.5, top: 89, bottom: 753.5 }}
          prices={evenly(seq(1349, -1, 18).map((v) => v.toFixed(2)), 117.5, 35.73)}
          times={timeScale(['04:00', '04:30', '05:00', '05:30', '06:00', '06:30', '07:00', '07:30', '08:00', '08:30'], 1834.5)}
          lines={[[126.5, 2451, '#ffd700'], [617.5, 2451, '#ff00ff']]}
          tags={[
            { y: 126, text: '1348.75', fill: '#ffd700', width: 55 },
            { y: 241.5, text: '1345.50', fill: '#000000', color: '#e0e0e0', width: 55 },
            { y: 447.5, text: '1339.73', fill: '#ffffff', width: 55 },
          ]}
        />
      </Win>

      <Win className="top-[6px] left-[1255px] h-[760px] w-[954px]" title="GC 06-11 (5 Min)  5/6/2011" icon={<ChartIcon />} link="bg-[#ffff00]" bodyClass="bg-black">
        <Toolbar symbol="GC 06-11" />
        <PriceChart
          view={[1262, 60, 940, 699]}
          candles={GOLD}
          firstX={1794.5}
          toY={(n) => 78.5 + (190 - n) * 4.307}
          up="#ffd700"
          ma={GOLD_MA}
          axis={{ x: 2144.5, top: 65, bottom: 730.5 }}
          prices={evenly(seq(1489, -1, 16).map((v) => v.toFixed(1)), 78.5, 43.07)}
          times={timeScale(['06:30', '07:00', '07:30', '08:00', '08:30'], 1838.5)}
          lines={[[707.5, 2125, '#ff00ff']]}
          tags={[
            { y: 414.5, text: '1481.2', fill: '#ffffff', width: 48 },
            { y: 422.5, text: '1481.0', fill: '#000000', color: '#e0e0e0', width: 48 },
            { y: 706.5, text: '1474.4', fill: '#ff00ff', color: '#ffffff', width: 48 },
          ]}
        />
      </Win>

      <Win className="top-[31px] left-[1025px] h-[759px] w-[766px]" link="bg-[#d8bfd8]" glass="clear" bodyClass="bg-black">
        <Toolbar symbol="ZN 06-11" />
        <PriceChart
          view={[1032, 85, 752, 698]}
          caption="MAX(ZN 06-11 (5 Min),20), PriorDayOHLC(ZN 06-11 (5 Min))"
          candles={NOTES}
          firstX={1335.5}
          toY={(n) => 717.5 - n * 11.604}
          up="#808080"
          ma={NOTES_MA}
          axis={{ x: 1696.5, top: 90, bottom: 754.5 }}
          prices={evenly(["122'080", "122'040", "122'000", "121'280", "121'240", "121'200", "121'160"], 160.5, 92.9)}
          times={timeScale(['04:00', '04:30', '05:00', '05:30', '06:00', '06:30', '07:00', '07:30', '08:00', '08:30'], 1060.5)}
          lines={[[184.5, 1677, '#ffd700'], [218.5, 1677, '#ff00ff'], [671.5, 1677, '#ffd700']]}
          tags={[
            { y: 183.5, text: '122.218750', fill: '#ffd700', width: 76 },
            { y: 217.5, text: '122.171875', fill: '#ff00ff', color: '#ffffff', width: 76 },
            { y: 368.5, text: '121.969428', fill: '#ffffff', width: 76 },
            { y: 589.5, text: "121'215", fill: '#000000', color: '#e0e0e0', width: 54 },
            { y: 670.5, text: '121.562500', fill: '#ffd700', width: 76 },
          ]}
          marker={[1687.5, 518.5]}
        />
      </Win>

      <Win className="top-[3px] left-[47px] h-[767px] w-[971px]" title="6E 06-11 (5 Min)  5/6/2011" icon={<ChartIcon />} link="bg-[#40e0d0]" bodyClass="bg-black">
        <Toolbar symbol="6E 06-11" />
        <PriceChart
          view={[54, 57, 957, 706]}
          caption="MAX(6E 06-11 (5 Min),20), PriorDayOHLC(6E 06-11 (5 Min))"
          candles={EURO}
          firstX={64.5}
          toY={(n) => 70.5 + (190 - n) * 3.961}
          up="#3399ff"
          ma={EURO_MA}
          axis={{ x: 953.5, top: 62, bottom: 733.5 }}
          prices={evenly(seq(1.459, -0.001, 17).map((v) => v.toFixed(4)), 70.5, 39.61)}
          times={timeScale(['02:30', '03:00', '03:30', '04:00', '04:30', '05:00', '05:30', '06:00', '06:30', '07:00', '07:30', '08:00', '08:30'], 119.5)}
          lines={[[355.5, 934, '#ff00ff'], [443.5, 934, '#ffd700']]}
          tags={[
            { y: 354.5, text: '1.4518', fill: '#ff00ff', color: '#ffffff', width: 48 },
            { y: 453.5, text: '1.4493', fill: '#ffffff', width: 48 },
            { y: 442.5, text: '1.4496', fill: '#ffd700', width: 48 },
            { y: 537.5, text: '1.4472', fill: '#000000', color: '#e0e0e0', width: 48 },
          ]}
          marker={[922.5, 338.5]}
        />
      </Win>

      <Win className="top-[3px] left-[1013px] h-[447px] w-[325px] rounded-b-[7px]" title="ZN 06-11" icon={<LadderIcon />} link="bg-[#d8bfd8]" glass="mist" dimMax bodyClass="bg-[#404040]">
        <Ladder rows={ZN_ROWS} height="h-[292px]" pnl="$120.00" />
        <LadderActions middle="2" middleClass="bg-[#ff0000] text-white" cancel />
        <OrderForm />
      </Win>

      <Win className="top-[533px] left-[1011px] h-[460px] w-[325px]" title="ES 06-11" icon={<LadderIcon />} link="bg-[#00ff00]" dimMax bodyClass="bg-[#003000]">
        <Ladder rows={ES_ROWS} height="h-[356px]" pnl="$110.00" />
        <LadderActions middle="1" middleClass="bg-[#00ff00]" />
      </Win>

      <Win className="top-[527px] left-[2219px] h-[460px] w-[325px]" title="GC 06-11" icon={<LadderIcon />} link="bg-[#ffff00]" dimMax bodyClass="bg-[#808000]">
        <Ladder rows={GC_ROWS} height="h-[356px]" pnl="247.50" />
        <LadderActions middle="1" middleClass="bg-[#faebd7]" />
      </Win>

      <Win className="top-[284px] -left-[12px] h-[500px] w-[325px]" title="6E 06-11" icon={<LadderIcon />} link="bg-[#40e0d0]" dimMax bodyClass="bg-[#000080]">
        <Ladder rows={EURO_ROWS} height="h-[420px]" pnl="PnL" />
        <LadderActions middle="FLAT" />
      </Win>

      <div className="absolute top-[768px] bottom-0 left-0 w-[1024px] bg-black" />
      <Taskbar />
    </main>
  );
}
